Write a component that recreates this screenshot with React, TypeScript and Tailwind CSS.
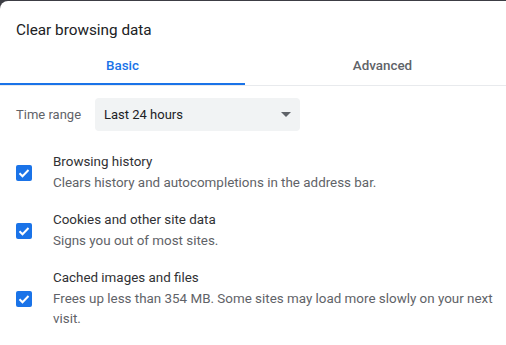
import React from "react";

type Item = { title: string; desc: string };

const items: Item[] = [
  { title: "Browsing history", desc: "Clears history and autocompletions in the address bar." },
  { title: "Cookies and other site data", desc: "Signs you out of most sites." },
  {
    title: "Cached images and files",
    desc: "Frees up less than 354 MB. Some sites may load more slowly on your next visit.",
  },
];

function Check() {
  return (
    <div className="flex h-4 w-4 shrink-0 items-center justify-center rounded-[2px] bg-[#1a73e8]">
      <svg viewBox="0 0 16 16" className="h-4 w-4">
        <path d="M3.5 8.2l3 3 6-6.2" fill="none" stroke="white" strokeWidth="2" />
      </svg>
    </div>
  );
}

export default function App() {
  return (
    <div
      className="h-[345px] w-[506px] overflow-hidden bg-[#3c3d44] pt-px"
      style={{ fontFamily: "Roboto, 'Liberation Sans', sans-serif" }}
    >
      <div className="h-full w-[520px] rounded-tl-[8px] bg-white">
        <div className="px-4 pt-[17px] text-[15.3px] leading-6 text-[#202124]">Clear browsing data</div>
        <div className="mt-[5px] flex border-b border-[#e8eaed]">
          <div className="relative flex h-[38px] w-[245px] justify-center pt-[9px] text-[13.4px] font-medium text-[#1a73e8]">
            Basic
            <div className="absolute bottom-0 left-0 right-0 h-[2px] bg-[#1a73e8]" />
          </div>
          <div className="flex h-[38px] w-[275px] justify-center pt-[9px] text-[13.4px] font-medium text-[#5f6368]">
            Advanced
          </div>
        </div>
        <div className="mt-[12px] flex items-center px-4">
          <div className="w-[79px] text-[13px] text-[#5f6368]">Time range</div>
          <div className="flex h-[33px] w-[205px] items-center justify-between rounded-[4px] bg-[#f1f3f4] pl-[9px] pr-[9px] text-[13px] text-[#202124]">
            <span>Last 24 hours</span>
            <svg viewBox="0 0 10 5" className="h-[5px] w-[10px]">
              <path d="M0 0h10L5 5z" fill="#5f6368" />
            </svg>
          </div>
        </div>
        <div className="mt-[21px] flex w-[506px] flex-col gap-[17px] pl-4 pr-[12px]">
          {items.map((it) => (
            <div key={it.title} className="flex items-center">
              <Check />
              <div className="ml-[21px] text-[13.4px] leading-[20px]">
                <div className="text-[#303134]">{it.title}</div>
                <div className="mt-px text-[#5f6368]">{it.desc}</div>
              </div>
            </div>
          ))}
        </div>
      </div>
    </div>
  );
}
